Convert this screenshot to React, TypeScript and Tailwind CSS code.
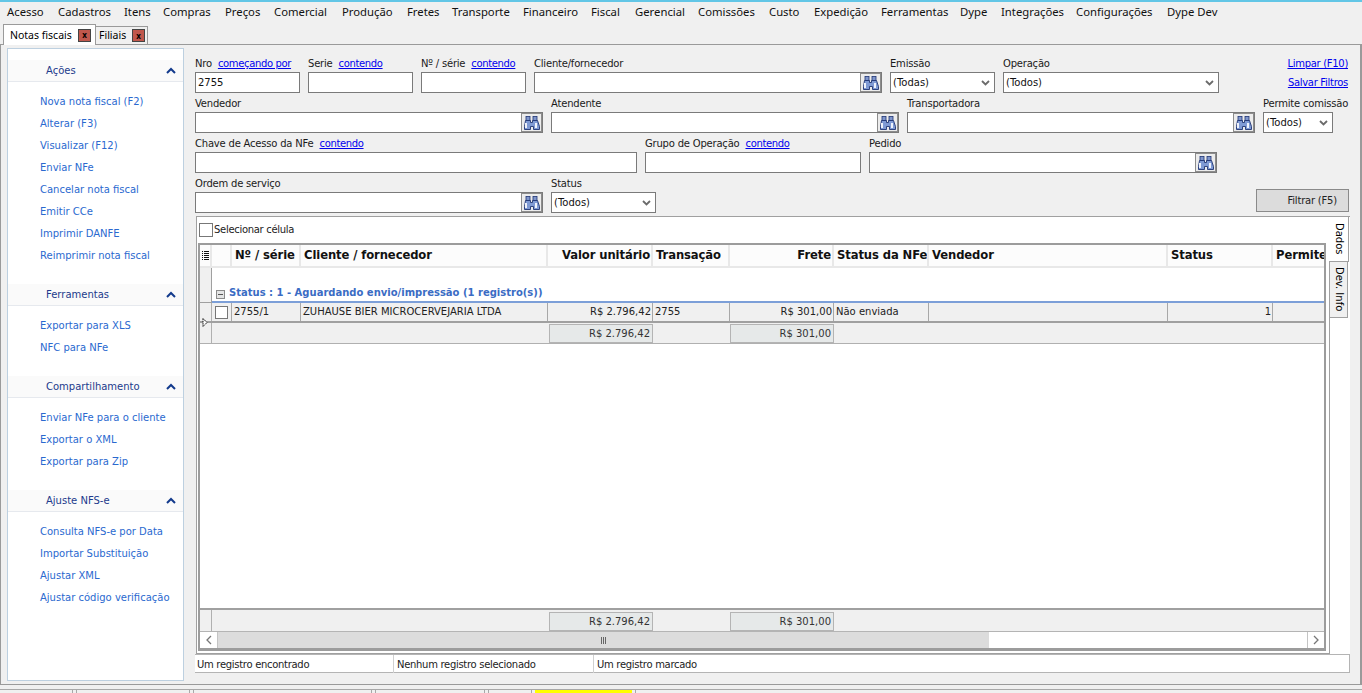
import type { ReactNode } from 'react';

const font = 'font-["DejaVu_Sans",sans-serif]';

const menuItems = [
  ['Acesso', 'w-[51px]'],
  ['Cadastros', 'w-[66px]'],
  ['Itens', 'w-[39px]'],
  ['Compras', 'w-[62px]'],
  ['Preços', 'w-[49px]'],
  ['Comercial', 'w-[68px]'],
  ['Produção', 'w-[65px]'],
  ['Fretes', 'w-[45px]'],
  ['Transporte', 'w-[71px]'],
  ['Financeiro', 'w-[68px]'],
  ['Fiscal', 'w-[44px]'],
  ['Gerencial', 'w-[63px]'],
  ['Comissões', 'w-[71px]'],
  ['Custo', 'w-[45px]'],
  ['Expedição', 'w-[67px]'],
  ['Ferramentas', 'w-[79px]'],
  ['Dype', 'w-[41px]'],
  ['Integrações', 'w-[75px]'],
  ['Configurações', 'w-[91px]'],
  ['Dype Dev', 'w-[70px]'],
];

const sideGroups = [
  {
    title: 'Ações',
    pad: 'pb-[17px]',
    items: ['Nova nota fiscal (F2)', 'Alterar (F3)', 'Visualizar (F12)', 'Enviar NFe', 'Cancelar nota fiscal', 'Emitir CCe', 'Imprimir DANFE', 'Reimprimir nota fiscal'],
  },
  { title: 'Ferramentas', pad: 'pb-[17px]', items: ['Exportar para XLS', 'NFC para NFe'] },
  { title: 'Compartilhamento', pad: 'pb-[17px]', items: ['Enviar NFe para o cliente', 'Exportar o XML', 'Exportar para Zip'] },
  { title: 'Ajuste NFS-e', pad: '', items: ['Consulta NFS-e por Data', 'Importar Substituição', 'Ajustar XML', 'Ajustar código verificação'] },
];

function Binoculars() {
  return (
    <span className="flex h-[19px] w-[21px] shrink-0 items-center justify-center border border-[#8c8c8c] bg-[#ececec]">
      <svg width="17" height="14" viewBox="0 0 17 14">
        <rect x="3" y="0.5" width="4" height="4" fill="#7f96cc" stroke="#1f3473" strokeWidth="0.8" />
        <rect x="10" y="0.5" width="4" height="4" fill="#7f96cc" stroke="#1f3473" strokeWidth="0.8" />
        <path d="M2.5 4.5h5v2h2v-2h5l2 6v3h-6v-3h-3v3h-6v-3z" fill="#7f9ad4" stroke="#1f3473" strokeWidth="0.9" />
        <rect x="2" y="7" width="2" height="5" fill="#eef2fb" />
        <rect x="12" y="7" width="2" height="5" fill="#eef2fb" />
      </svg>
    </span>
  );
}

function Chevron() {
  return (
    <svg width="9" height="6" viewBox="0 0 9 6" className="shrink-0">
      <path d="M1 1l3.5 3.5L8 1" fill="none" stroke="#6b6b6b" strokeWidth="1.8" />
    </svg>
  );
}

function Field({ label, link, width, value, search, select }: { label: string; link?: string; width: string; value?: string; search?: boolean; select?: boolean }) {
  return (
    <div className={`${width} flex h-[40px] shrink-0 flex-col`}>
      <div className="flex h-[15px] items-start gap-[6px] whitespace-nowrap leading-[13px] tracking-[-0.2px] text-[#1a1a1a]">
        <span>{label}</span>
        {link && <span className="tracking-[-0.35px] text-[#0000ee] underline">{link}</span>}
      </div>
      <div className="flex h-[21px] items-center justify-between border border-[#7a7a7a] bg-white pl-[2px] pr-0 text-[#111]">
        <span>{value}</span>
        {search && <Binoculars />}
        {select && <span className="pr-[4px]"><Chevron /></span>}
      </div>
    </div>
  );
}

function Cell({ w, right, bold, children, className = '' }: { w: string; right?: boolean; bold?: boolean; children?: ReactNode; className?: string }) {
  return (
    <div className={`${w} ${right ? 'justify-end !pr-[1px]' : 'pl-[2px]'} ${bold ? 'font-bold' : ''} flex shrink-0 items-center overflow-hidden whitespace-nowrap ${className}`}>
      {children}
    </div>
  );
}

const cols = {
  ind: 'w-[12px]',
  chk: 'w-[20px]',
  num: 'w-[69px]',
  cli: 'w-[247px]',
  val: 'w-[105px]',
  tra: 'w-[77px]',
  fre: 'w-[104px]',
  nfe: 'w-[95px]',
  ven: 'w-[239px]',
  sta: 'w-[105px]',
};

function HeaderCell({ w, right, children }: { w: string; right?: boolean; children?: ReactNode }) {
  return (
    <Cell w={w} right={right} bold className="border-b-2 border-r-2 border-[#e8e8e8] bg-[#fcfcfc] pl-[3px] pt-px text-[11.6px] tracking-[-0.1px] text-[#111]">
      {children}
    </Cell>
  );
}

function SummaryRow({ className, pad }: { className: string; pad: string }) {
  return (
    <div className={`flex shrink-0 bg-[#f0f0f0] text-[#333] ${className}`}>
      <div className="w-[12px] shrink-0 border-r border-[#b0b0b0]" />
      <div className="w-[337px] shrink-0" />
      <div className={`w-[104px] shrink-0 ${pad}`}>
        <div className="flex h-[19px] items-center justify-end border border-[#b4b4b4] bg-[#e6e9e9] pr-[2px]">R$ 2.796,42</div>
      </div>
      <div className="w-[77px] shrink-0" />
      <div className={`w-[104px] shrink-0 ${pad}`}>
        <div className="flex h-[19px] items-center justify-end border border-[#b4b4b4] bg-[#e6e9e9] pr-[2px]">R$ 301,00</div>
      </div>
    </div>
  );
}

function Grid() {
  return (
    <div className="mt-px flex h-[408px] w-[1128px] flex-col overflow-hidden border-2 border-b-[3px] border-[#9c9c9c] bg-white">
      {/* header */}
      <div className="flex h-[23px] shrink-0">
        <div className="flex w-[12px] shrink-0 items-center justify-center border-b-2 border-r-2 border-[#e8e8e8] bg-[#fcfcfc]">
          <svg width="7" height="9" viewBox="0 0 7 9">
            <path d="M0 .5h1M2 .5h5M0 2.5h1M2 2.5h5M0 4.5h1M2 4.5h5M0 6.5h1M2 6.5h5M0 8.5h1M2 8.5h5" stroke="#111" />
          </svg>
        </div>
        <HeaderCell w={cols.chk} />
        <HeaderCell w={cols.num}>Nº / série</HeaderCell>
        <HeaderCell w={cols.cli}>Cliente / fornecedor</HeaderCell>
        <HeaderCell w={cols.val} right>Valor unitário</HeaderCell>
        <HeaderCell w={cols.tra}>Transação</HeaderCell>
        <HeaderCell w={cols.fre} right>Frete</HeaderCell>
        <HeaderCell w={cols.nfe}>Status da NFe</HeaderCell>
        <HeaderCell w={cols.ven}>Vendedor</HeaderCell>
        <HeaderCell w={cols.sta}>Status</HeaderCell>
        <HeaderCell w="w-[60px]">Permite</HeaderCell>
      </div>
      {/* group */}
      <div className="flex h-[35px] shrink-0">
        <div className="w-[12px] shrink-0 border-b border-r border-[#a0a0a0] bg-[#f0f0f0]" />
        <div className="flex flex-1 items-end gap-[4px] border-b-2 border-[#7c9fd8] pb-[1px] pl-[4px] font-bold text-[#3a6cc4]">
          <span className="mb-[1px] flex h-[9px] w-[9px] items-center justify-center border border-[#8a8a8a] bg-[#e4e4e4]">
            <span className="h-px w-[5px] bg-[#555]" />
          </span>
          <span className="text-[10px] leading-[14px]">Status : 1 - Aguardando envio/impressão (1 registro(s))</span>
        </div>
      </div>
      {/* row */}
      <div className="flex h-[20px] shrink-0 border-b-2 border-[#a0a0a0] bg-[#f0f0f0] text-[#222]">
        <div className="flex w-[12px] shrink-0 items-end justify-center border-r border-[#b0b0b0] text-[#111]">
          <svg width="6" height="9" viewBox="0 0 6 9" className="translate-x-[-1px] translate-y-[6px]">
            <path d="M1 0.5l4 4-4 4z" fill="white" stroke="#111" strokeDasharray="1.5 0.7" />
          </svg>
        </div>
        <Cell w={cols.chk} className="justify-center border-r border-[#a8a8a8] !pl-0">
          <span className="h-[13px] w-[13px] border border-[#777] bg-white" />
        </Cell>
        <Cell w={cols.num} className="border-r border-[#a8a8a8]">2755/1</Cell>
        <Cell w={cols.cli} className="border-r border-[#a8a8a8] text-[10px]">ZUHAUSE BIER MICROCERVEJARIA LTDA</Cell>
        <Cell w={cols.val} right className="border-r border-[#a8a8a8]">R$ 2.796,42</Cell>
        <Cell w={cols.tra} className="border-r border-[#a8a8a8]">2755</Cell>
        <Cell w={cols.fre} right className="border-r border-[#a8a8a8]">R$ 301,00</Cell>
        <Cell w={cols.nfe} className="border-r border-[#a8a8a8]">Não enviada</Cell>
        <Cell w={cols.ven} className="border-r border-[#a8a8a8]" />
        <Cell w={cols.sta} right className="border-r border-[#a8a8a8]">1</Cell>
      </div>
      <SummaryRow className="h-[21px] border-b border-[#b0b0b0]" pad="pt-[1px]" />
      <div className="flex-1" />
      <SummaryRow className="h-[23px] border-t-2 border-[#a0a0a0]" pad="pt-[2px]" />
      {/* scrollbar */}
      <div className="flex h-[17px] shrink-0 border-t border-[#b4b4b4]">
        <div className="flex w-[18px] shrink-0 items-center justify-center border-r border-[#c4c4c4]">
          <svg width="6" height="10" viewBox="0 0 6 10"><path d="M5 1L1 5l4 4" fill="none" stroke="#777" strokeWidth="1.3" /></svg>
        </div>
        <div className="flex w-[771px] shrink-0 items-center justify-center gap-px bg-[#dcdcdc]">
          <span className="h-[7px] w-px bg-[#666]" />
          <span className="h-[7px] w-px bg-[#666]" />
          <span className="h-[7px] w-px bg-[#666]" />
        </div>
        <div className="flex-1" />
        <div className="flex w-[17px] shrink-0 items-center justify-center border-l border-[#c4c4c4]">
          <svg width="6" height="10" viewBox="0 0 6 10"><path d="M1 1l4 4-4 4" fill="none" stroke="#777" strokeWidth="1.3" /></svg>
        </div>
      </div>
    </div>
  );
}

function Sidebar() {
  return (
    <div className="flex h-[633px] w-[177px] shrink-0 flex-col border border-[#bdd0e0] bg-white pt-[11px]">
      {sideGroups.map((g) => (
        <div key={g.title} className={g.pad}>
          <div className="flex h-[22px] items-center justify-between border-b border-[#e6e9ee] bg-[#fafafa] pl-[38px] pr-[7px] text-[#223a8c]">
            <span>{g.title}</span>
            <svg width="10" height="7" viewBox="0 0 10 7"><path d="M1 6l4-4 4 4" fill="none" stroke="#123a8c" strokeWidth="2" /></svg>
          </div>
          <div className="flex flex-col pt-[9px]">
            {g.items.map((item) => (
              <div key={item} className="flex h-[22px] items-center whitespace-nowrap pl-[32px] text-[#2a69cf]">
                {item}
              </div>
            ))}
          </div>
        </div>
      ))}
    </div>
  );
}

function Filters() {
  return (
    <div className="flex flex-col">
      <div className="flex gap-[8px]">
        <Field label="Nro" link="começando por" width="w-[105px]" value="2755" />
        <Field label="Serie" link="contendo" width="w-[105px]" />
        <Field label="Nº / série" link="contendo" width="w-[105px]" />
        <Field label="Cliente/fornecedor" width="w-[348px]" search />
        <Field label="Emissão" width="w-[105px]" value="(Todas)" select />
        <Field label="Operação" width="w-[216px]" value="(Todos)" select />
        <div className="flex flex-1 flex-col items-end gap-[5px] pr-[2px] tracking-[-0.3px] text-[#0000ee] underline">
          <span className="leading-[14px]">Limpar (F10)</span>
          <span className="leading-[14px]">Salvar Filtros</span>
        </div>
      </div>
      <div className="flex gap-[8px]">
        <Field label="Vendedor" width="w-[348px]" search />
        <Field label="Atendente" width="w-[348px]" search />
        <Field label="Transportadora" width="w-[348px]" search />
        <Field label="Permite comissão" width="w-[70px]" value="(Todos)" select />
      </div>
      <div className="flex gap-[8px]">
        <Field label="Chave de Acesso da NFe" link="contendo" width="w-[442px]" />
        <Field label="Grupo de Operação" link="contendo" width="w-[216px]" />
        <Field label="Pedido" width="w-[348px]" search />
      </div>
      <div className="flex gap-[8px]">
        <Field label="Ordem de serviço" width="w-[348px]" search />
        <Field label="Status" width="w-[105px]" value="(Todos)" select />
        <div className="flex flex-1 justify-end pr-[1px] pt-[12px]">
          <div className="flex h-[23px] w-[93px] items-center justify-end border border-[#8a8a8a] bg-[#dcdcdc] pr-[11px] tracking-[-0.2px] text-[#222]">
            Filtrar (F5)
          </div>
        </div>
      </div>
    </div>
  );
}

export default function App() {
  return (
    <div className={`${font} flex h-[693px] w-[1362px] flex-col overflow-hidden bg-[#f0f0f0] text-[10px] leading-none`}>
      <div className="h-[2px] shrink-0 bg-[#62c6e6]" />
      {/* menu */}
      <div className="flex h-[20px] shrink-0 items-center whitespace-nowrap pl-[7px] font-['Noto_Sans',sans-serif] text-[11.3px] text-[#111]">
        {menuItems.map(([m, w]) => (
          <span key={m} className={`${w} shrink-0`}>{m}</span>
        ))}
      </div>
      {/* tabs */}
      <div className="flex h-[22px] shrink-0 items-end whitespace-nowrap pl-[3px] font-['Noto_Sans',sans-serif] text-[10.5px]">
        <div className="relative z-10 -mb-px flex h-[21px] w-[93px] items-center justify-between border border-b-0 border-[#9a9a9a] bg-white pl-[6px] pr-[4px]">
          <span>Notas fiscais</span>
          <span className="flex h-[13px] w-[13px] items-center justify-center border border-[#444] bg-[#c0574c] text-[8px] font-bold leading-none text-black">x</span>
        </div>
        <div className="flex h-[18px] w-[52px] items-center justify-between border border-b-0 border-l-0 border-[#9a9a9a] pl-[3px] pr-[1px]">
          <span>Filiais</span>
          <span className="mr-[1px] flex h-[13px] w-[13px] items-center justify-center border border-[#444] bg-[#c0574c] text-[8px] font-bold leading-none text-black">x</span>
        </div>
      </div>
      {/* page */}
      <div className="flex h-[641px] shrink-0 gap-[11px] border border-r-2 border-[#9a9a9a] pl-[6px] pt-[3px]">
        <Sidebar />
        <div className="flex w-[1155px] shrink-0 flex-col">
          <div className="pt-[9px]">
            <Filters />
          </div>
          <div className="-mt-px ml-px flex h-[438px] border-t border-l border-[#a0a0a0] bg-white">
            <div className="flex w-[1133px] shrink-0 flex-col border-b border-r border-[#a0a0a0] pl-[1px]">
              <div className="flex h-[25px] items-center gap-[1px] tracking-[-0.3px] text-[#222]">
                <span className="ml-px h-[14px] w-[14px] border border-[#777] bg-white" />
                <span>Selecionar célula</span>
              </div>
              <Grid />
            </div>
            <div className="flex w-[19px] flex-col">
              <div className="relative z-10 -ml-px flex h-[45px] w-[20px] items-center justify-start border-b border-r border-[#a0a0a0] bg-white pt-[6px] [writing-mode:vertical-rl]">
                Dados
              </div>
              <div className="flex h-[56px] w-[18px] items-center justify-start border-b border-r border-[#a0a0a0] bg-[#f0f0f0] pt-[5px] [writing-mode:vertical-rl]">
                Dev. Info
              </div>
            </div>
          </div>
          {/* status */}
          <div className="flex h-[19px] w-[1155px] items-center border border-l-0 border-[#b4b4b4] bg-white tracking-[-0.3px] text-[#222]">
            <span className="w-[199px] shrink-0 border-r border-[#d0d0d0] pl-[2px] pt-[1px] leading-[17px]">Um registro encontrado</span>
            <span className="w-[200px] shrink-0 border-r border-[#d0d0d0] pl-[3px] pt-[1px] leading-[17px]">Nenhum registro selecionado</span>
            <span className="pl-[3px] pt-[1px] leading-[17px]">Um registro marcado</span>
          </div>
        </div>
      </div>
      {/* bottom tabs */}
      <div className="mt-[4px] flex flex-1 gap-[3px] border-t border-[#a8a8a8]">
        <span className="w-[73px] border-r border-[#a8a8a8]" />
        <span className="w-[114px] border-x border-[#a8a8a8]" />
        <span className="w-[179px] border-x border-[#a8a8a8]" />
        <span className="w-[110px] border-x border-[#a8a8a8]" />
        <span className="w-[44px] border-x border-[#a8a8a8]" />
        <span className="w-[97px] bg-[#ffff00]" />
        <span className="flex-1 border-l border-[#a8a8a8]" />
      </div>
    </div>
  );
}
